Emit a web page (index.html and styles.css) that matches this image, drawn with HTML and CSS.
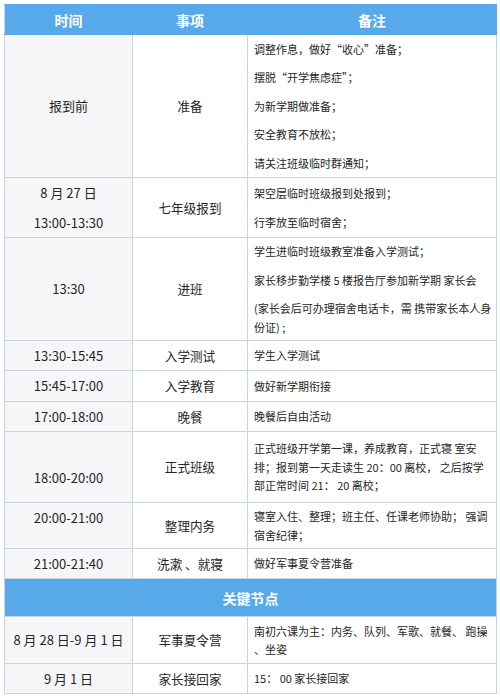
FILE: index.html
```html
<!DOCTYPE html>
<html lang="zh-CN">
<head>
<meta charset="utf-8">
<title>报到日程</title>
<link rel="stylesheet" href="styles.css">
</head>
<body>
<table class="sched">
  <colgroup>
    <col class="c-time">
    <col class="c-item">
    <col class="c-note">
  </colgroup>
  <thead>
    <tr class="h-head">
      <th>时间</th>
      <th>事项</th>
      <th>备注</th>
    </tr>
  </thead>
  <tbody>
    <tr class="h-r1">
      <td class="time">报到前</td>
      <td class="item">准备</td>
      <td class="note">
        <p>调整作息，做好“收心”准备；</p>
        <p>摆脱“开学焦虑症”；</p>
        <p>为新学期做准备；</p>
        <p>安全教育不放松；</p>
        <p>请关注班级临时群通知；</p>
      </td>
    </tr>
    <tr class="h-r2">
      <td class="time">
        <p class="tp">8 月 27 日</p>
        <p class="tp">13:00-13:30</p>
      </td>
      <td class="item">七年级报到</td>
      <td class="note">
        <p>架空层临时班级报到处报到；</p>
        <p>行李放至临时宿舍；</p>
      </td>
    </tr>
    <tr class="h-r3">
      <td class="time">13:30</td>
      <td class="item">进班</td>
      <td class="note">
        <p>学生进临时班级教室准备入学测试；</p>
        <p>家长移步勤学楼 5 楼报告厅参加新学期 家长会</p>
        <p>(家长会后可办理宿舍电话卡，需 携带家长本人身<br>份证) ;</p>
      </td>
    </tr>
    <tr class="h-r4">
      <td class="time">13:30-15:45</td>
      <td class="item">入学测试</td>
      <td class="note"><p>学生入学测试</p></td>
    </tr>
    <tr class="h-r5">
      <td class="time">15:45-17:00</td>
      <td class="item">入学教育</td>
      <td class="note"><p>做好新学期衔接</p></td>
    </tr>
    <tr class="h-r6">
      <td class="time">17:00-18:00</td>
      <td class="item">晚餐</td>
      <td class="note"><p>晚餐后自由活动</p></td>
    </tr>
    <tr class="h-r7">
      <td class="time time-low">18:00-20:00</td>
      <td class="item">正式班级</td>
      <td class="note">
        <p>正式班级开学第一课，养成教育，正式寝 室安<br>排；报到第一天走读生 20：00 离校， 之后按学<br>部正常时间 21： 20 离校；</p>
      </td>
    </tr>
    <tr class="h-r8">
      <td class="time time-top">20:00-21:00</td>
      <td class="item">整理内务</td>
      <td class="note">
        <p>寝室入住、整理；班主任、任课老师协助； 强调<br>宿舍纪律；</p>
      </td>
    </tr>
    <tr class="h-r9">
      <td class="time">21:00-21:40</td>
      <td class="item">洗漱 、就寝</td>
      <td class="note"><p>做好军事夏令营准备</p></td>
    </tr>
    <tr class="section">
      <td colspan="3">关键节点</td>
    </tr>
    <tr class="h-r10">
      <td class="time">8 月 28 日-9 月 1 日</td>
      <td class="item">军事夏令营</td>
      <td class="note">
        <p>南初六课为主：内务、队列、军歌、就餐、 跑操<br>、坐姿</p>
      </td>
    </tr>
    <tr class="h-r11">
      <td class="time">9 月 1 日</td>
      <td class="item">家长接回家</td>
      <td class="note"><p>15： 00 家长接回家</p></td>
    </tr>
  </tbody>
</table>
</body>
</html>
```

FILE: styles.css
```css
html, body {
  margin: 0;
  padding: 0;
  background: #ffffff;
}

body {
  padding: 4px 4px 0 4px;
  font-family: "Noto Sans CJK SC", "Noto Sans", sans-serif;
  color: #262626;
}

.sched {
  width: 492px;
  border-collapse: collapse;
  table-layout: fixed;
  border: 1px solid #c6d2dc;
}

.c-time { width: 128px; }
.c-item { width: 115px; }
.c-note { width: 249px; }

.sched th,
.sched td {
  border: 1px solid #c9d5df;
  padding: 0;
}

.sched th {
  background: #57a9ea;
  color: #ffffff;
  font-size: 14px;
  font-weight: 700;
  text-align: center;
  border-color: #57a9ea;
  line-height: 20px;
}

.h-head th:first-child { border-left-color: #c6d2dc; }

.time {
  background: #f6f6f8;
  text-align: center;
  font-size: 13px;
  line-height: 20px;
  vertical-align: middle;
}

.tp {
  margin: 0;
}

.tp + .tp {
  margin-top: 10px;
}

.time-low {
  vertical-align: top;
  padding-top: 36px !important;
}

.time-top {
  vertical-align: top;
  padding-top: 5px !important;
}

.item {
  text-align: center;
  font-size: 12.6px;
  line-height: 20px;
  vertical-align: middle;
  background: #ffffff;
}

.note {
  font-size: 11px;
  line-height: 18.5px;
  vertical-align: middle;
  padding: 4px 6px 4px 6px !important;
  white-space: nowrap;
  background: #ffffff;
}

.note p {
  margin: 0;
}

.note p + p {
  margin-top: 10px;
}

.section td {
  background: #57a9ea;
  color: #ffffff;
  font-size: 14px;
  font-weight: 700;
  text-align: center;
  border-left-color: #c6d2dc;
  border-right-color: #c6d2dc;
}

.h-head { height: 30px; }
.h-r1 { height: 143px; }
.h-r2 { height: 60px; }
.h-r3 { height: 103px; }
.h-r4 { height: 30px; }
.h-r5 { height: 31px; }
.h-r6 { height: 30px; }
.h-r7 { height: 71px; }
.h-r8 { height: 45px; }
.h-r9 { height: 30px; }
.section { height: 38px; }
.h-r10 { height: 47px; }
.h-r11 { height: 30px; }
```
